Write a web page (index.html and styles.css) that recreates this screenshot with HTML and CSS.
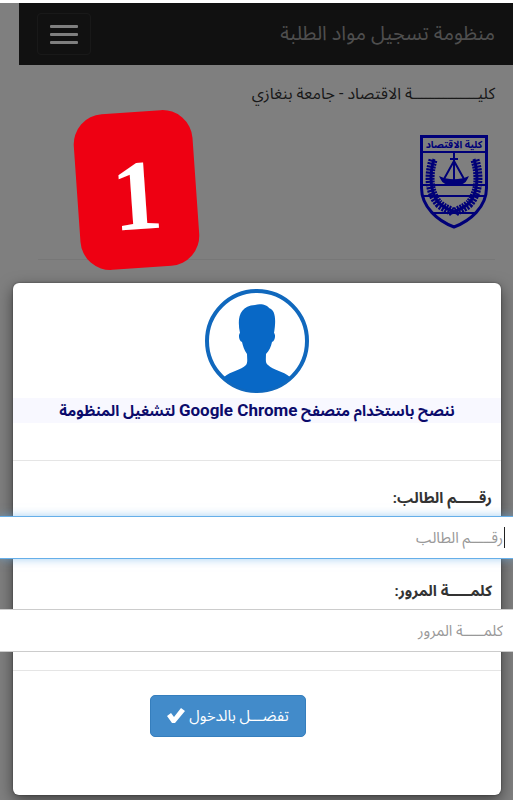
FILE: index.html
```
<!DOCTYPE html>
<html lang="ar" dir="rtl">
<head>
    <meta charset="UTF-8">
    <meta name="viewport" content="width=device-width, initial-scale=1.0">
    <title>منظومة تسجيل مواد الطلبة</title>
    <link rel="stylesheet" href="styles.css">
</head>
<body>
    <div class="page">
        <nav class="navbar">
            <a class="brand" href="#">منظومة تسجيل مواد الطلبة</a>
            <button type="button" class="toggle" aria-label="القائمة">
                <span></span>
                <span></span>
                <span></span>
            </button>
        </nav>
        <header class="college">
            <p>كليـــــــــــــــة الاقتصاد - جامعة بنغازي</p>
            <svg class="crest" viewBox="0 0 68 94" fill="none" stroke="#0000f0" stroke-width="2">
                <path d="M1.500 1.500H66.500V53C66.500 72 50 86 34 92C18 86 1.500 72 1.500 53Z" stroke-width="3"/>
                <path d="M2 17H66M2 50H66M2 61H66M11 78H57"/>
                <text x="34" y="13" text-anchor="middle">كلية الاقتصاد</text>
                <path d="M34 18V46M30 24H38M34 26L24 44M34 26L44 44"/>
                <path d="M21 43C27 46 41 46 47 43C45 48 42 49 34 49C26 49 23 48 21 43Z" fill="#0000f0"/>
                <path d="M14 24C9 40 10 60 20 69C26 74 32 76 39 79M54 24C59 40 58 60 48 69C42 74 36 76 29 79" stroke-width="3"/>
                <path d="M13 25C8 41 9 58 19 69C24 73 29 75 33 77M55 25C60 41 59 58 49 69C44 73 39 75 35 77" stroke-width="9" stroke-dasharray="2 1"/>
            </svg>
        </header>
        <hr>
    </div>

    <div class="backdrop"></div>
    <div class="step">1</div>

    <div class="modal">
        <div class="modal-header">
            <svg class="avatar" viewBox="0 0 104 104">
                <circle cx="52" cy="52" r="50" fill="#fff" stroke="#1068bd" stroke-width="4"/>
                <path d="M19 88C26 82 36 81 41 76C43 73 42 69 42 65C39 61 38 57 37 53C34 52 33 46 35 44C32 30 34 17 50 16C57 14 63 17 64 19C71 21 71 32 69 44C71 46 70 52 67 53C66 58 64 62 61 65C61 70 60 74 63 76C68 81 78 82 85 88C66 107 38 107 19 88Z" fill="#0868c6"/>
            </svg>
            <h4>ننصح باستخدام متصفح <span>Google Chrome</span> لتشغيل المنظومة</h4>
        </div>
        <form action="">
            <div class="modal-body">
                <label for="student">رقـــــم الطالب:</label>
                <div class="field">
                    <input type="text" class="active" name="student" id="student" placeholder="رقـــــم الطالب">
                    <span class="caret"></span>
                </div>
                <label for="password">كلمـــــة المرور:</label>
                <div class="field">
                    <input type="password" name="password" id="password" placeholder="كلمـــــة المرور">
                </div>
            </div>
            <div class="modal-footer">
                <button type="submit" class="login">
                    <span>تفضـــل بالدخول</span>
                    <svg viewBox="0 0 18 16"><path d="M0 8L4 5L7 9L14 0L18 3L8 15L5 15Z" fill="#fff"/></svg>
                </button>
            </div>
        </form>
    </div>
</body>
</html>
```
FILE: styles.css
```
* {
  box-sizing: border-box;
}

body {
  position: relative;
  margin: 0;
  min-height: 100vh;
  background-color: #fff;
  font-family: Roboto, "Noto Sans Arabic", "Noto Naskh Arabic UI", sans-serif;
  font-size: 15px;
  color: #333;
}

.page {
  padding-top: 3px;
}

.navbar {
  display: flex;
  align-items: center;
  justify-content: space-between;
  height: 62px;
  margin-left: 19px;
  padding: 0 18px;
  background-color: #222;
}

.brand {
  color: #9d9d9d;
  font-size: 20px;
  text-decoration: none;
}

.toggle {
  display: flex;
  flex-direction: column;
  align-items: center;
  justify-content: center;
  gap: 5px;
  width: 54px;
  height: 42px;
  padding: 0;
  background: none;
  border: 1px solid #333;
  border-radius: 4px;
}

.toggle span {
  width: 28px;
  height: 3px;
  border-radius: 1px;
  background-color: #fff;
}

.college {
  padding: 14px 18px 0;
}

.college p {
  margin: 0 0 26px;
  font-size: 16px;
  line-height: 30px;
}

.crest {
  display: block;
  width: 68px;
  height: 94px;
  margin-right: 7px;
}

.crest text {
  direction: rtl;
  fill: #0000f0;
  stroke: none;
  font-size: 10px;
  font-weight: bold;
}

hr {
  margin: 30px 18px 0 38px;
  border: 0;
  border-top: 1px solid #eee;
}

.backdrop {
  position: absolute;
  top: 3px;
  right: 0;
  bottom: 0;
  left: 0;
  background-color: rgba(0, 0, 0, 0.5);
}

/* step number over the dimmed page */
.step {
  position: absolute;
  top: 112px;
  left: 77px;
  width: 119px;
  height: 156px;
  border-radius: 30px;
  background-color: #ee0012;
  color: #fff;
  font-family: "Liberation Serif", serif;
  font-size: 100px;
  font-weight: bold;
  line-height: 168px;
  text-align: center;
  transform: rotate(-4deg);
}

.modal {
  position: absolute;
  top: 283px;
  right: 12px;
  left: 13px;
  padding-bottom: 58px;
  border-radius: 6px;
  background-color: #fff;
  box-shadow: 0 5px 15px rgba(0, 0, 0, 0.5), 0 0 2px rgba(0, 0, 0, 0.5);
}

.modal-header {
  height: 178px;
  padding-top: 6px;
  border-bottom: 1px solid #e5e5e5;
}

.avatar {
  display: block;
  width: 104px;
  height: 104px;
  margin: 0 auto 5px;
}

.modal-header h4 {
  margin: 0;
  background-color: #f8f8ff;
  color: #0b0b6b;
  font-size: 15px;
  line-height: 24px;
  text-align: center;
}

.modal-header h4 span {
  font-size: 17px;
}

.modal-body {
  padding: 23px 0 18px;
}

.modal-body label {
  display: block;
  height: 32px;
  padding: 0 9px;
  font-weight: bold;
  line-height: 28px;
}

/* fields run past both sides of the dialog */
.field {
  position: relative;
  margin: 0 -14px 18px;
}

.field:last-child {
  margin-bottom: 0;
}

.field input {
  display: block;
  width: 100%;
  height: 43px;
  padding: 0 11px;
  border: 1px solid #ccc;
  background-color: #fff;
  font-family: inherit;
  font-size: 15px;
  outline: none;
}

.field input::placeholder {
  color: #999;
}

.field .active {
  border-color: #66afe9;
  box-shadow: 0 0 9px rgba(102, 175, 233, 0.6);
}

.caret {
  position: absolute;
  top: 11px;
  right: 10px;
  width: 1px;
  height: 21px;
  background-color: #222;
}

.modal-footer {
  display: flex;
  justify-content: center;
  padding: 24px 58px 0 0;
  border-top: 1px solid #e5e5e5;
}

.login {
  display: flex;
  align-items: center;
  justify-content: center;
  gap: 4px;
  width: 156px;
  height: 42px;
  padding: 0;
  border: 1px solid #357ebd;
  border-radius: 5px;
  background-color: #428bca;
  color: #fff;
  font-family: inherit;
  font-size: 15px;
}

.login svg {
  width: 18px;
  height: 16px;
}
```
